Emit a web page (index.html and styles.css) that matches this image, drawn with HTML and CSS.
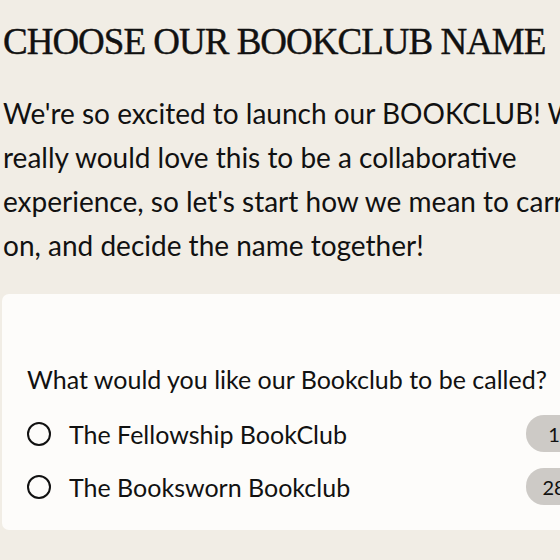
FILE: index.html
```html
<!DOCTYPE html>
<html lang="en">
<head>
<meta charset="utf-8">
<title>Choose our bookclub name</title>
<link rel="stylesheet" href="styles.css">
</head>
<body>
<main class="page">
  <h1 class="title">CHOOSE OUR BOOKCLUB NAME</h1>
  <p class="intro">We're so excited to launch our BOOKCLUB! We really would love this to be a collaborative experience, so let's start how we mean to carry on, and decide the name together!</p>
  <section class="card">
    <h2 class="question">What would you like our Bookclub to be called?</h2>
    <ul class="options">
      <li class="option">
        <span class="radio"></span>
        <span class="label">The Fellowship BookClub</span>
        <span class="count">1</span>
      </li>
      <li class="option">
        <span class="radio"></span>
        <span class="label">The Booksworn Bookclub</span>
        <span class="count">28</span>
      </li>
    </ul>
  </section>
</main>
</body>
</html>
```
FILE: styles.css
```css
html {
  overflow: hidden;
  background: #f1ede5;
}
body {
  margin: 0;
  background: #f1ede5;
  color: #111;
  font-family: Lato, "Open Sans", sans-serif;
}
.page {
  width: 605px;
  padding: 0 2px;
}
.title {
  margin: 20px 0 0 1px;
  font-family: "Liberation Serif", serif;
  font-weight: 400;
  font-size: 37px;
  letter-spacing: -1px;
  line-height: 44px;
  white-space: nowrap;
  -webkit-text-stroke: 0.4px #111;
}
.intro {
  margin: 27px 0 0 1px;
  font-size: 28px;
  line-height: 44px;
}
.card {
  margin-top: 27px;
  background: #fdfcfa;
  border-radius: 7px;
  padding: 69px 25px 25px;
}
.question {
  margin: 0;
  font-size: 25px;
  font-weight: 400;
  line-height: 32px;
}
.options {
  list-style: none;
  margin: 20px 0 0;
  padding: 0;
  display: flex;
  flex-direction: column;
  gap: 16px;
}
.option {
  display: flex;
  align-items: center;
  gap: 18px;
  height: 37px;
}
.radio {
  width: 20px;
  height: 20px;
  border: 2px solid #111;
  border-radius: 50%;
  flex: none;
}
.label {
  flex: 1;
  font-size: 25px;
}
.count {
  width: 56px;
  height: 37px;
  border-radius: 18px;
  background: #cdcac6;
  display: flex;
  align-items: center;
  justify-content: center;
  font-size: 20px;
}
```
